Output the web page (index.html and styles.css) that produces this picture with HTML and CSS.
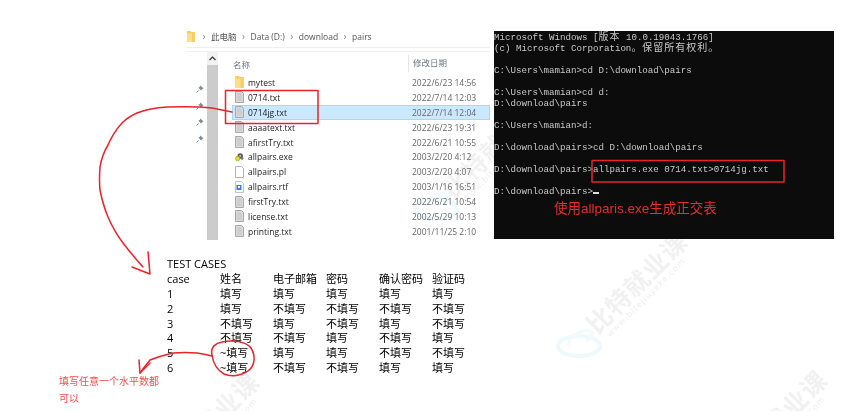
FILE: index.html
```html
<!DOCTYPE html>
<html lang="zh">
<head>
<meta charset="utf-8">
<title>allpairs</title>
<link rel="stylesheet" href="styles.css">
</head>
<body>
<svg width="0" height="0" class="defs">
  <symbol id="doc" viewBox="0 0 9 12"><path d="M.5.5h6l2 2v9H.5z" fill="#d9d9d9" stroke="#a8a8a8"/><path d="M2 3h4M2 5h5M2 7h5M2 9h5" stroke="#c4c4c4"/></symbol>
  <symbol id="blank" viewBox="0 0 9 12"><path d="M.5.5h6l2 2v9H.5z" fill="#fff" stroke="#b4b4b4"/></symbol>
  <symbol id="rtf" viewBox="0 0 9 12"><path d="M.5.5h6l2 2v9H.5z" fill="#fff" stroke="#b4c4dc"/><rect x="1.5" y="4" width="5" height="5" fill="#3a7fd8"/><rect x="3" y="5" width="2" height="2" fill="#fff"/></symbol>
  <symbol id="exe" viewBox="0 0 12 12"><circle cx="7" cy="4.5" r="3.6" fill="#555"/><circle cx="7" cy="4.5" r="1.4" fill="#bbb"/><circle cx="3.6" cy="8" r="3" fill="#e8dc20" stroke="#8a8410" stroke-width=".7"/><circle cx="9.5" cy="8" r="1.8" fill="#777"/></symbol>
  <symbol id="folder" viewBox="0 0 8 11"><path d="M0 0h3.5l1 1H8v10H0z" fill="#f5cf62"/><path d="M0 2.500h5v8.500H0z" fill="#fbdf8a"/></symbol>
  <symbol id="pin" viewBox="0 0 8 8"><path d="M4.500.5l3 3-1.300.6-1 1.500-2.800-2.800 1.500-1z" fill="#7f8c97"/><path d="M2.600 5.400L.5 7.500" stroke="#7f8c97"/></symbol>
  <symbol id="rings" viewBox="0 0 46 32"><ellipse cx="23" cy="19" rx="21" ry="10" fill="none" stroke="#eef9fd" stroke-width="4"/><path d="M12 19C14 8 28 1 34 4c5 3 0 8-4 10" fill="none" stroke="#f3fafd" stroke-width="3"/></symbol>
</svg>

<main class="canvas">
  <div class="mark mark-a"><b>比特就业课</b><i>www.bitejiuyeke.com</i></div>
  <div class="mark mark-b"><b>比特就业课</b><i>www.bitejiuyeke.com</i></div>
  <div class="mark mark-c"><b>比特就业课</b><i>www.bitejiuyeke.com</i></div>
  <div class="mark mark-d"><b>比特就业课</b><i>www.bitejiuyeke.com</i></div>
  <svg class="rings rings-a"><use href="#rings"/></svg>
  <svg class="rings rings-b"><use href="#rings"/></svg>

  <div class="top">
    <section class="explorer">
      <div class="crumbs">
        <svg class="crumb-folder"><use href="#folder"/></svg>
        <span class="chev">›</span><span>此电脑</span>
        <span class="chev">›</span><span>Data (D:)</span>
        <span class="chev">›</span><span>download</span>
        <span class="chev">›</span><span>pairs</span>
      </div>
      <div class="pane">
        <div class="pins">
          <svg class="pin"><use href="#pin"/></svg>
          <svg class="pin"><use href="#pin"/></svg>
          <svg class="pin"><use href="#pin"/></svg>
          <svg class="pin"><use href="#pin"/></svg>
        </div>
        <div class="scrollbar">
          <div class="scroll-btn"><svg width="7" height="5" viewBox="0 0 7 5"><path d="M.5 4L3.500 1l3 3" fill="none" stroke="#333" stroke-width="1.200"/></svg></div>
          <div class="scroll-thumb"></div>
        </div>
        <div class="files">
          <div class="head"><span class="head-name">名称</span><span class="head-date">修改日期</span></div>
          <div class="row"><svg class="ico"><use href="#folder"/></svg><span class="name">mytest</span><span class="date">2022/6/23 14:56</span></div>
          <div class="row"><svg class="ico"><use href="#doc"/></svg><span class="name">0714.txt</span><span class="date">2022/7/14 12:03</span></div>
          <div class="row selected"><svg class="ico"><use href="#doc"/></svg><span class="name">0714jg.txt</span><span class="date">2022/7/14 12:04</span></div>
          <div class="row"><svg class="ico"><use href="#doc"/></svg><span class="name">aaaatext.txt</span><span class="date">2022/6/23 19:31</span></div>
          <div class="row"><svg class="ico"><use href="#doc"/></svg><span class="name">afirstTry.txt</span><span class="date">2022/6/21 10:55</span></div>
          <div class="row"><svg class="ico"><use href="#exe"/></svg><span class="name">allpairs.exe</span><span class="date">2003/2/20 4:12</span></div>
          <div class="row"><svg class="ico"><use href="#blank"/></svg><span class="name">allpairs.pl</span><span class="date">2003/2/20 4:07</span></div>
          <div class="row"><svg class="ico"><use href="#rtf"/></svg><span class="name">allpairs.rtf</span><span class="date">2003/1/16 16:51</span></div>
          <div class="row"><svg class="ico"><use href="#doc"/></svg><span class="name">firstTry.txt</span><span class="date">2022/6/21 10:54</span></div>
          <div class="row"><svg class="ico"><use href="#doc"/></svg><span class="name">license.txt</span><span class="date">2002/5/29 10:13</span></div>
          <div class="row"><svg class="ico"><use href="#doc"/></svg><span class="name">printing.txt</span><span class="date">2001/11/25 2:10</span></div>
        </div>
      </div>
    </section>

    <section class="terminal">
<pre class="term-text">Microsoft Windows [<span class="wide">版本</span> 10.0.19043.1766]
(c) Microsoft Corporation<span class="wide">。保留所有权利。</span>

C:\Users\mamian&gt;cd D:\download\pairs

C:\Users\mamian&gt;cd d:
D:\download\pairs

C:\Users\mamian&gt;d:

D:\download\pairs&gt;cd D:\download\pairs

D:\download\pairs&gt;allpairs.exe 0714.txt&gt;0714jg.txt

D:\download\pairs&gt;<span class="cursor"></span></pre>
      <p class="term-note">使用allparis.exe生成正交表</p>
    </section>
  </div>

  <section class="cases">
    <div class="cases-title">TEST CASES</div>
    <div class="grid">
      <span>case</span><span>姓名</span><span>电子邮箱</span><span>密码</span><span>确认密码</span><span>验证码</span>
      <span>1</span><span>填写</span><span>填写</span><span>填写</span><span>填写</span><span>填写</span>
      <span>2</span><span>填写</span><span>不填写</span><span>不填写</span><span>不填写</span><span>不填写</span>
      <span>3</span><span>不填写</span><span>填写</span><span>不填写</span><span>填写</span><span>不填写</span>
      <span>4</span><span>不填写</span><span>不填写</span><span>填写</span><span>不填写</span><span>填写</span>
      <span>5</span><span>~填写</span><span>填写</span><span>填写</span><span>不填写</span><span>不填写</span>
      <span>6</span><span>~填写</span><span>不填写</span><span>不填写</span><span>填写</span><span>填写</span>
    </div>
  </section>

  <p class="note">填写任意一个水平数都<br>可以</p>

  <svg class="ink" width="860" height="411" viewBox="0 0 860 411">
    <g class="ink-red">
      <rect x="225.500" y="90.500" width="92.500" height="33"/>
      <rect x="592" y="160.500" width="192" height="21.500"/>
      <path d="M232 112L212 108Q195 106 167 107Q150 108 137 113Q128 117 122 123Q113 133 108 145Q102 155 100 167Q99 180 100 190Q103 205 108 217Q114 231 123 243Q133 256 143 267"/>
      <path d="M132 267L150 274L148 252"/>
      <path d="M212 355C210 347 216 343 222 342C232 340 246 341 251 348C256 356 255 366 248 371C241 376 231 377 224 374C217 370 213 362 212 355"/>
      <path d="M212 356Q204 354 197 353Q185 352 173 353Q160 356 150 360Q145 366 140 373"/>
      <path d="M139 360L140 373L150 363"/>
    </g>
  </svg>
</main>
</body>
</html>
```

FILE: styles.css
```css
* { box-sizing: border-box; }
html, body { margin: 0; background: #fff; }
.defs { position: absolute; }

.canvas {
  position: relative;
  width: 860px;
  height: 411px;
  overflow: hidden;
  background: #fff;
  font-family: "Open Sans", "Noto Sans CJK SC", sans-serif;
  filter: blur(0.4px);
}

/* top row */
.top {
  position: relative;
  z-index: 1;
  display: flex;
  align-items: flex-start;
  gap: 4px;
  padding: 31px 0 0 186px;
  height: 240px;
}

/* explorer */
.explorer {
  width: 304px;
  height: 209px;
  color: #333;
}
.crumbs {
  display: flex;
  align-items: center;
  height: 17px;
  font-size: 8.500px;
  line-height: 11px;
  color: #555;
  gap: 4px;
  border-bottom: 1px solid #f0f0f0;
  padding-bottom: 6px;
}
.crumb-folder { width: 8px; height: 11px; margin: 0 2px 0 1px; flex: none; }
.chev { color: #888; width: 6px; text-align: center; font-size: 10px; }
.pane {
  display: flex;
  height: 192px;
  padding-top: 5px;
  border-top: 1px solid #f0f0f0;
  margin-top: 3px;
}
.pins {
  width: 21px;
  flex: none;
  display: flex;
  flex-direction: column;
  align-items: flex-end;
  gap: 8.700px;
  padding: 28px 3px 0 0;
}
.pin { width: 8px; height: 8px; }
.scrollbar { width: 11px; flex: none; background: #ccc; display: flex; flex-direction: column; margin-top: -5px; height: 188px; }
.scroll-btn { height: 13px; background: #f2f2f2; display: flex; align-items: center; justify-content: center; flex: none; }
.scroll-thumb { flex: 1; }
.files { flex: 1; padding-left: 13px; margin-top: -5px; }
.head {
  display: flex;
  height: 23px;
  align-items: center;
  font-size: 8.500px;
  color: #6b7785;
}
.head-name { width: 177px; padding-left: 2px; }
.head-date { padding-left: 4px; border-left: 1px solid #e5e5e5; height: 17px; line-height: 15px; }
.row {
  display: flex;
  align-items: center;
  height: 14.900px;
  font-size: 8.500px;
  margin-left: 1px;
  white-space: nowrap;
}
.row.selected { background: #cce8ff; box-shadow: inset 0 0 0 1px #a6d8ff; }
.ico { width: 9px; height: 12px; margin-left: 3px; flex: none; }
.name { width: 168px; padding-left: 4px; color: #222; flex: none; }
.date { color: #666; }

/* terminal */
.terminal {
  width: 340px;
  height: 208px;
  background: #0c0c0c;
  color: #c8c8c8;
  overflow: hidden;
}
.term-text {
  margin: 0;
  padding-top: 1px;
  font-family: "Liberation Mono", "Noto Sans CJK SC", monospace;
  font-size: 9.170px;
  line-height: 11px;
  white-space: pre;
}
.wide { font-size: 10px; letter-spacing: 1px; line-height: 0; }
.cursor { display: inline-block; width: 6px; height: 2px; background: #ddd; }
.term-note {
  margin: 3px 0 0 60px;
  font-family: "Liberation Sans", "Noto Sans CJK SC", sans-serif;
  font-size: 13.500px;
  line-height: 18px;
  color: #e2302c;
}

/* test cases */
.cases {
  position: relative;
  z-index: 1;
  padding-left: 167px;
  margin-top: 17px;
  font-size: 11px;
  line-height: 14.900px;
  color: #000;
}
.cases-title { height: 14.900px; }
.grid { display: grid; grid-template-columns: repeat(6, 53px); grid-auto-rows: 14.900px; white-space: nowrap; }

/* overlays */
.note {
  position: absolute;
  z-index: 2;
  left: 59px;
  top: 373px;
  margin: 0;
  font-size: 10px;
  line-height: 17px;
  color: #f0504c;
}
.ink { position: absolute; z-index: 3; left: 0; top: 0; pointer-events: none; }
.ink-red { fill: none; stroke: #e8232a; stroke-width: 1.500; stroke-linejoin: round; stroke-linecap: round; }

.mark {
  position: absolute;
  width: 140px;
  transform: rotate(-45deg);
  transform-origin: left top;
  color: #f1f1f1;
  white-space: nowrap;
  line-height: 1;
}
.mark b { display: block; font-size: 25px; font-weight: 700; letter-spacing: 1px; }
.mark i { display: block; font-style: normal; font-size: 8.500px; margin: 0 0 0 8px; letter-spacing: 1.200px; color: #ededed; }
.mark-a { left: 582px; top: 320px; }
.mark-b { left: 722px; top: 458px; }
.mark-c { left: 154px; top: 460px; }
.mark-d { left: 438px; top: 185px; }
.rings { position: absolute; width: 46px; height: 32px; }
.rings-a { left: 556px; top: 327px; }
.rings-b { left: 413px; top: 190px; }
```
